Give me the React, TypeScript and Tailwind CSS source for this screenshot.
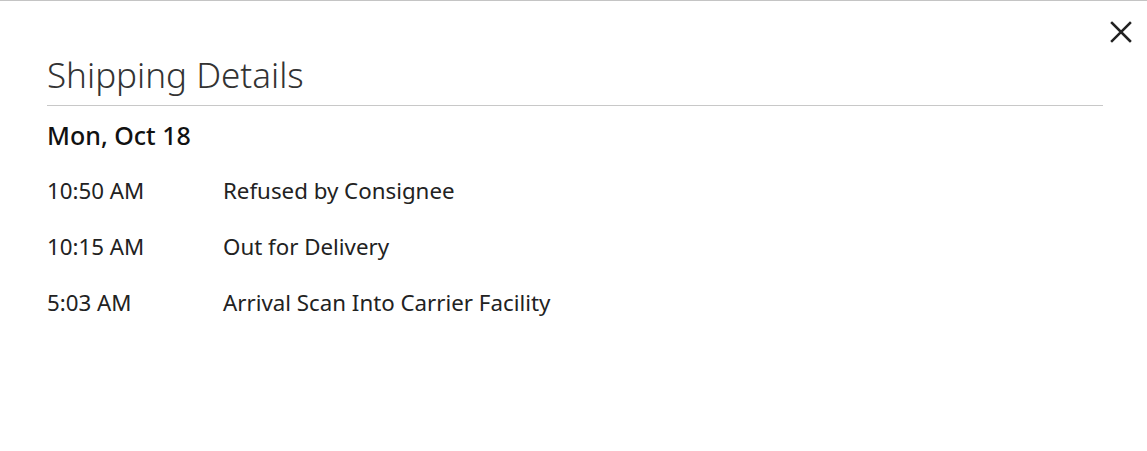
import React from 'react'

const events = [
    { time: '10:50 AM', status: 'Refused by Consignee' },
    { time: '10:15 AM', status: 'Out for Delivery' },
    { time: '5:03 AM', status: 'Arrival Scan Into Carrier Facility' },
]

function CloseIcon() {
    return (
        <svg width="22" height="22" viewBox="0 0 22 22" fill="none" stroke="#222" strokeWidth="2.5" strokeLinecap="square">
            <path d="M2 2L20 20M20 2L2 20" />
        </svg>
    )
}

export default function App() {
    return (
        <div className="w-[1147px] h-[451px] bg-white border-t border-[#c4c4c4] font-['Noto_Sans',sans-serif] text-[#212121]">
            <div className="flex justify-end pt-[20px] pr-[15px]">
                <button className="w-[22px] h-[22px] flex items-center justify-center">
                    <CloseIcon />
                </button>
            </div>
            <div className="pl-[47px] pr-[44px]">
                <h2 className="text-[35px] font-light leading-[35px] text-[#333] mt-[14px] pb-[13px] border-b border-[#c8c8c8]">
                    Shipping Details
                </h2>
                <div className="pt-[14px]">
                    <div className="text-[25px] font-medium text-[#111] leading-[30px]">Mon, Oct 18</div>
                    <div className="flex flex-col pt-[27px] gap-[28px]">
                        {events.map(e => (
                            <div key={e.time} className="flex text-[22.3px] leading-[28px] text-[#222]">
                                <span className="w-[176px]">{e.time}</span>
                                <span>{e.status}</span>
                            </div>
                        ))}
                    </div>
                </div>
            </div>
        </div>
    )
}
